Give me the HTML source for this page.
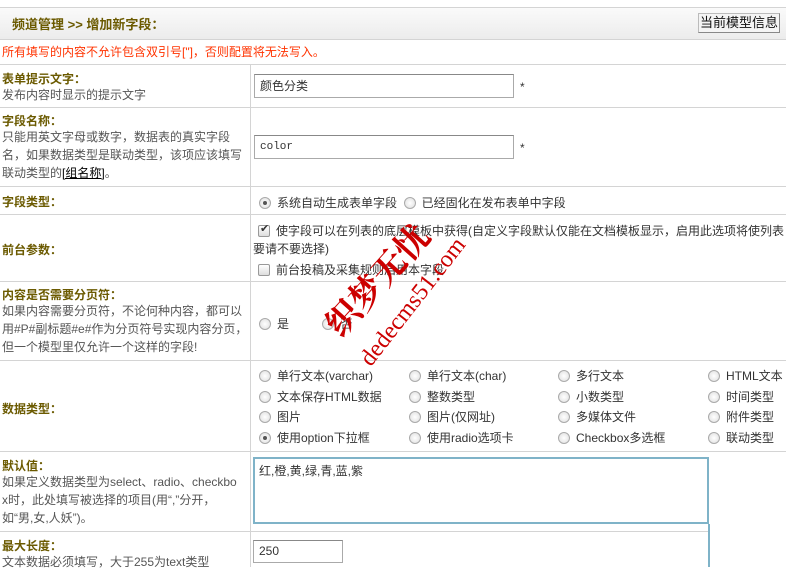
<!DOCTYPE html>
<html><head><meta charset="utf-8"><style>
*{margin:0;padding:0;box-sizing:border-box}
body{width:786px;height:567px;overflow:hidden;background:#fff;font-family:"Liberation Sans","Noto Sans CJK SC","WenQuanYi Zen Hei",sans-serif;font-size:12px;color:#333;position:relative}
.a{position:absolute;white-space:nowrap}
.h{position:absolute;left:0;width:786px;height:1px;background:#d4d4d4}
.lb{color:#6b5a00;font-weight:bold}
.ds{color:#555;line-height:18px}
.rd{display:inline-block;width:12px;height:12px;border:1px solid #aaa;border-radius:50%;background:radial-gradient(#fff,#ddd);vertical-align:-2px;margin-right:6px;position:relative}
.rd.on::after{content:"";position:absolute;left:3px;top:3px;width:4px;height:4px;border-radius:50%;background:#555}
.cb{display:inline-block;width:12px;height:12px;border:1px solid #999;border-radius:2px;background:linear-gradient(#fff,#ddd);vertical-align:-2px;margin-right:6px}
.in{position:absolute;border:1px solid #aaa;border-top-color:#888;background:#fff;padding-left:5px}
.mono{font-family:"Liberation Mono",monospace;font-size:11px}
</style></head><body>
<div class="h" style="top:7px"></div>
<div class="a" style="left:0;top:8px;width:786px;height:31px;background:linear-gradient(#fafafa,#ececec)"></div>
<div class="h" style="top:39px"></div>
<div class="a lb" style="left:12px;top:14px;font-size:13px">频道管理 &gt;&gt; 增加新字段：</div>
<div class="a" style="left:698px;top:13px;width:82px;height:20px;border:1px solid #bbb;border-right-color:#888;border-bottom-color:#888;background:#f4f4f4;color:#111;font-size:13px;text-align:center;line-height:18px">当前模型信息</div>
<div class="a" style="left:2px;top:43px;color:#ff3300;font-size:12px">所有填写的内容不允许包含双引号["]，否则配置将无法写入。</div>
<div class="h" style="top:64px"></div>
<div class="a" style="left:250px;top:64px;width:1px;height:503px;background:#d4d4d4"></div>
<div class="a lb" style="left:2px;top:70px">表单提示文字：</div>
<div class="a ds" style="left:2px;top:86px">发布内容时显示的提示文字</div>
<div class="in" style="left:254px;top:74px;width:260px;height:24px;line-height:22px">颜色分类</div>
<div class="a" style="left:520px;top:80px">*</div>
<div class="h" style="top:107px"></div>
<div class="a lb" style="left:2px;top:112px">字段名称：</div>
<div class="a ds" style="left:2px;top:128px;line-height:18px">只能用英文字母或数字，数据表的真实字段<br>名，如果数据类型是联动类型，该项应该填写<br>联动类型的<u style="color:#000">[组名称]</u>。</div>
<div class="in mono" style="left:254px;top:135px;width:260px;height:24px;line-height:22px">color</div>
<div class="a" style="left:520px;top:141px">*</div>
<div class="h" style="top:186px"></div>
<div class="a lb" style="left:2px;top:193px">字段类型：</div>
<div class="a" style="left:259px;top:194px"><span class="rd on"></span>系统自动生成表单字段 &nbsp;<span class="rd"></span>已经固化在发布表单中字段</div>
<div class="h" style="top:214px"></div>
<div class="a lb" style="left:2px;top:241px">前台参数：</div>
<div class="a" style="left:258px;top:222px"><span class="cb" style="position:relative"><span style="position:absolute;left:1px;top:-4px;font-size:11px;color:#333">✔</span></span>使字段可以在列表的底层模板中获得(自定义字段默认仅能在文档模板显示，启用此选项将使列表</div>
<div class="a" style="left:253px;top:240px">要请不要选择)</div>
<div class="a" style="left:258px;top:261px"><span class="cb"></span>前台投稿及采集规则启用本字段</div>
<div class="h" style="top:281px"></div>
<div class="a lb" style="left:2px;top:286px">内容是否需要分页符：</div>
<div class="a ds" style="left:2px;top:302px">如果内容需要分页符，不论何种内容，都可以<br>用#P#副标题#e#作为分页符号实现内容分页，<br>但一个模型里仅允许一个这样的字段!</div>
<div class="a" style="left:259px;top:315px"><span class="rd"></span>是 <span style="display:inline-block;width:30px"></span><span class="rd"></span>否</div>
<div class="h" style="top:360px"></div>
<div class="a lb" style="left:2px;top:400px">数据类型：</div>
<div class="a" style="left:259px;top:366px;line-height:20.7px">
<span class="rd"></span>单行文本(varchar)<br><span class="rd"></span>文本保存HTML数据<br><span class="rd"></span>图片<br><span class="rd on"></span>使用option下拉框</div>
<div class="a" style="left:409px;top:366px;line-height:20.7px">
<span class="rd"></span>单行文本(char)<br><span class="rd"></span>整数类型<br><span class="rd"></span>图片(仅网址)<br><span class="rd"></span>使用radio选项卡</div>
<div class="a" style="left:558px;top:366px;line-height:20.7px">
<span class="rd"></span>多行文本<br><span class="rd"></span>小数类型<br><span class="rd"></span>多媒体文件<br><span class="rd"></span>Checkbox多选框</div>
<div class="a" style="left:708px;top:366px;line-height:20.7px">
<span class="rd"></span>HTML文本<br><span class="rd"></span>时间类型<br><span class="rd"></span>附件类型<br><span class="rd"></span>联动类型</div>
<div class="h" style="top:451px"></div>
<div class="a lb" style="left:2px;top:457px">默认值：</div>
<div class="a ds" style="left:2px;top:473px">如果定义数据类型为select、radio、checkbo<br>x时，此处填写被选择的项目(用“,”分开，<br>如“男,女,人妖”)。</div>
<div class="a" style="left:253px;top:457px;width:456px;height:67px;border:2px solid #7fb3c8;background:#fff;padding:3px 4px">红,橙,黄,绿,青,蓝,紫</div>
<div class="a" style="left:708px;top:524px;width:2px;height:43px;background:#7fb3c8"></div>
<div class="h" style="top:531px;width:708px"></div>
<div class="a lb" style="left:2px;top:537px">最大长度：</div>
<div class="a ds" style="left:2px;top:553px">文本数据必须填写，大于255为text类型</div>
<div class="in" style="left:253px;top:540px;width:90px;height:23px;line-height:21px">250</div>
<div class="a" style="left:318px;top:318px;transform:rotate(-48deg);transform-origin:left top;color:#cc0000;font-size:34px;font-weight:bold;font-family:'Noto Serif CJK SC',serif;line-height:34px">织梦无忧</div>
<div class="a" style="left:355px;top:355px;transform:rotate(-52deg);transform-origin:left top;color:#cc0000;font-size:24px;font-family:'Liberation Serif',serif">dedecms51.com</div>
</body></html>
